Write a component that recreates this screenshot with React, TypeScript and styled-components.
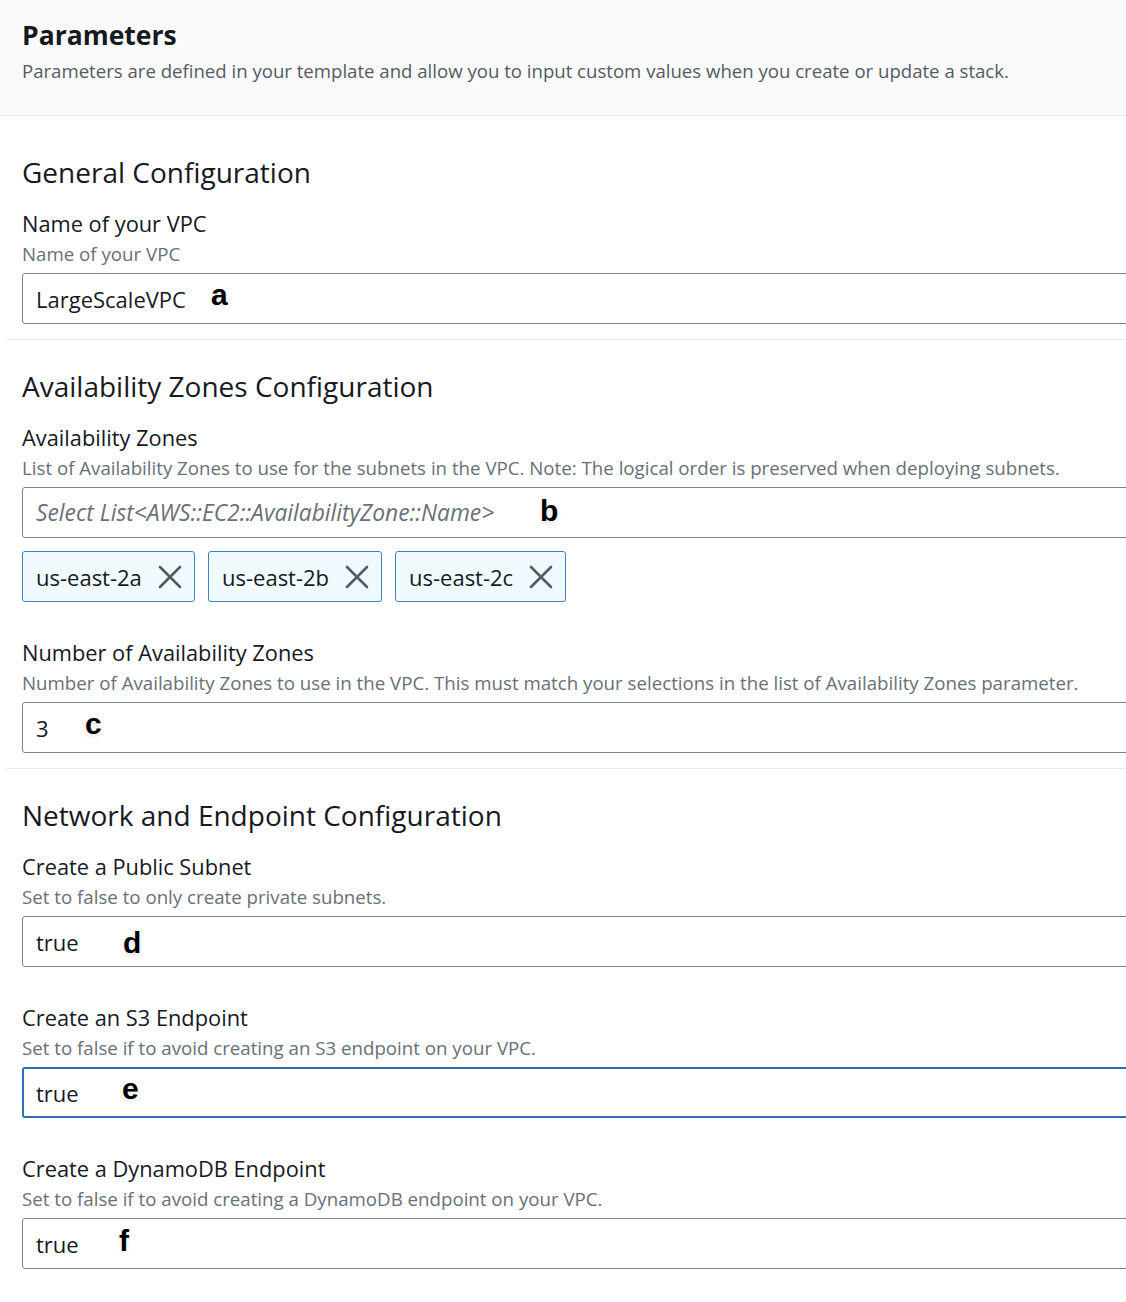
import React from "react";
import styled, { createGlobalStyle } from "styled-components";

const GlobalStyle = createGlobalStyle`
  html, body { margin: 0; padding: 0; background: #ffffff; }
  body { overflow-x: hidden; font-family: "Open Sans", "Noto Sans", Arial, sans-serif; color: #16191f; }
  #root { overflow: hidden; width: 1126px; }
`;

const Page = styled.div`
  width: 1126px;
  overflow: hidden;
`;

const Header = styled.header`
  background: #fafafa;
  border-bottom: 1px solid #e9ebed;
  padding: 17px 22px 30px;
`;

const Title = styled.h1`
  margin: 0;
  font-size: 26.5px;
  line-height: 36px;
  font-weight: 700;
  color: #16191f;
`;

const HeaderDesc = styled.p`
  margin: 4px 0 0;
  font-size: 18.6px;
  line-height: 28px;
  color: #545b64;
`;

const Body = styled.div`
  padding-top: 10px;
`;

const Section = styled.section<{ $last?: boolean }>`
  margin-left: 6px;
  padding: 28px 0 ${(p) => (p.$last ? "30px" : "15px")} 16px;
  border-bottom: ${(p) => (p.$last ? "none" : "1px solid #eaeded")};
  display: flex;
  flex-direction: column;
  gap: 36px;
`;

const SectionTitle = styled.h2`
  margin: 0 0 -17px;
  font-size: 28px;
  line-height: 36px;
  font-weight: 400;
  color: #16191f;
`;

const Field = styled.div`
  display: flex;
  flex-direction: column;
  margin-right: -60px;
`;

const Label = styled.div`
  font-size: 21.8px;
  line-height: 30px;
  color: #16191f;
`;

const Desc = styled.div`
  font-size: 18.7px;
  line-height: 30px;
  color: #687078;
  margin-bottom: 4px;
`;

const InputBox = styled.div<{ $focused?: boolean }>`
  position: relative;
  box-sizing: border-box;
  height: 51px;
  border: ${(p) => (p.$focused ? "2px solid #2b6fb8" : "1px solid #7d8590")};
  border-radius: 3px;
  padding: 0 ${(p) => (p.$focused ? "12px" : "13px")};
  display: flex;
  align-items: center;
  font-size: 22px;
  color: #16191f;
  background: #fff;
`;

const Placeholder = styled.span`
  font-style: italic;
  color: #687078;
  font-size: 22.8px;
`;

const Marker = styled.span<{ $x: number; $y: number }>`
  position: absolute;
  left: ${(p) => p.$x}px;
  top: ${(p) => p.$y}px;
  font-family: "Liberation Sans", Arial, sans-serif;
  font-weight: 700;
  font-size: 30px;
  line-height: 30px;
  color: #000;
  text-shadow: 0 2px 5px rgba(0, 0, 0, 0.12);
`;

const TokenRow = styled.div`
  display: flex;
  gap: 13px;
  margin-top: 13px;
`;

const Token = styled.div<{ $w: number }>`
  box-sizing: border-box;
  width: ${(p) => p.$w}px;
  height: 51px;
  background: #f1faff;
  border: 1px solid #3b82c4;
  border-radius: 3px;
  padding: 0 12px 0 13px;
  display: flex;
  align-items: center;
  justify-content: space-between;
  font-size: 22px;
  color: #16191f;
`;

const CloseIcon = () => (
  <svg width="24" height="24" viewBox="0 0 24 24" fill="none">
    <path d="M2 2 L22 22 M22 2 L2 22" stroke="#545b64" strokeWidth="2.6" strokeLinecap="round" />
  </svg>
);

const zones = [
  { name: "us-east-2a", w: 173 },
  { name: "us-east-2b", w: 174 },
  { name: "us-east-2c", w: 171 },
];

export default function App() {
  return (
    <Page>
      <GlobalStyle />
      <Header>
        <Title>Parameters</Title>
        <HeaderDesc>
          Parameters are defined in your template and allow you to input custom values when you create or update a stack.
        </HeaderDesc>
      </Header>
      <Body>
        <Section>
          <SectionTitle>General Configuration</SectionTitle>
          <Field>
            <Label>Name of your VPC</Label>
            <Desc>Name of your VPC</Desc>
            <InputBox>
              LargeScaleVPC
              <Marker $x={188} $y={6}>a</Marker>
            </InputBox>
          </Field>
        </Section>
        <Section>
          <SectionTitle>Availability Zones Configuration</SectionTitle>
          <Field>
            <Label>Availability Zones</Label>
            <Desc>
              List of Availability Zones to use for the subnets in the VPC. Note: The logical order is preserved when deploying subnets.
            </Desc>
            <InputBox>
              <Placeholder>Select List&lt;AWS::EC2::AvailabilityZone::Name&gt;</Placeholder>
              <Marker $x={517} $y={8}>b</Marker>
            </InputBox>
            <TokenRow>
              {zones.map((z) => (
                <Token key={z.name} $w={z.w}>
                  {z.name}
                  <CloseIcon />
                </Token>
              ))}
            </TokenRow>
          </Field>
          <Field>
            <Label>Number of Availability Zones</Label>
            <Desc>
              Number of Availability Zones to use in the VPC. This must match your selections in the list of Availability Zones parameter.
            </Desc>
            <InputBox>
              3
              <Marker $x={62} $y={6}>c</Marker>
            </InputBox>
          </Field>
        </Section>
        <Section $last>
          <SectionTitle>Network and Endpoint Configuration</SectionTitle>
          <Field>
            <Label>Create a Public Subnet</Label>
            <Desc>Set to false to only create private subnets.</Desc>
            <InputBox>
              true
              <Marker $x={100} $y={11}>d</Marker>
            </InputBox>
          </Field>
          <Field>
            <Label>Create an S3 Endpoint</Label>
            <Desc>Set to false if to avoid creating an S3 endpoint on your VPC.</Desc>
            <InputBox $focused>
              true
              <Marker $x={98} $y={5}>e</Marker>
            </InputBox>
          </Field>
          <Field>
            <Label>Create a DynamoDB Endpoint</Label>
            <Desc>Set to false if to avoid creating a DynamoDB endpoint on your VPC.</Desc>
            <InputBox>
              true
              <Marker $x={96} $y={7}>f</Marker>
            </InputBox>
          </Field>
        </Section>
      </Body>
    </Page>
  );
}
